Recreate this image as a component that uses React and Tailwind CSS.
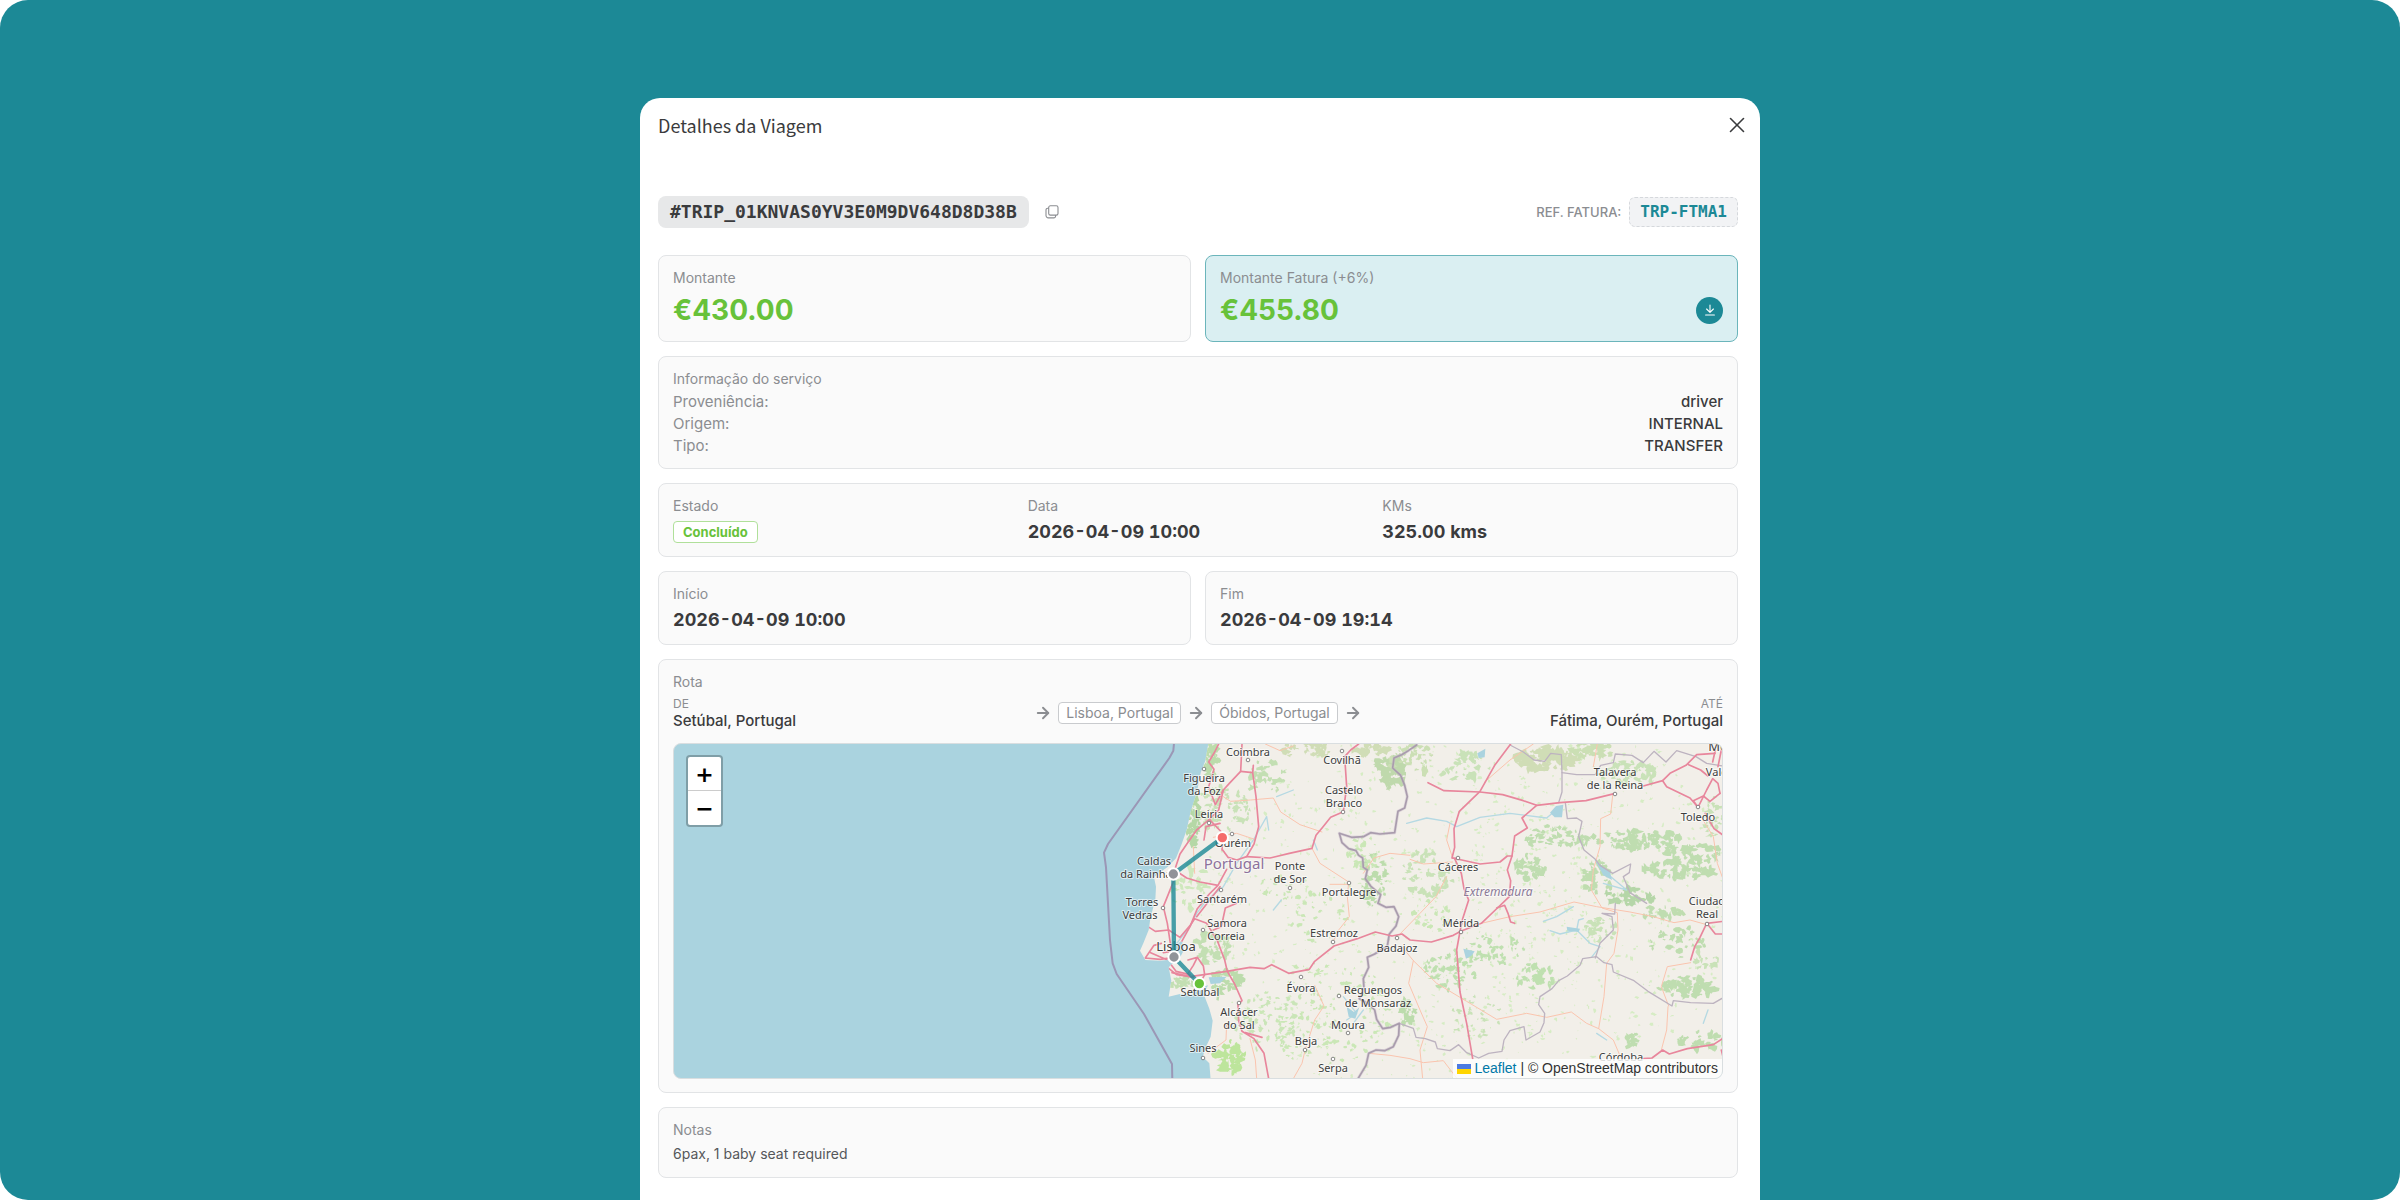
import { ArrowRight, X } from "lucide-react";

const serviceInfo = [
  { label: "Proveniência:", value: "driver" },
  { label: "Origem:", value: "INTERNAL" },
  { label: "Tipo:", value: "TRANSFER" },
];

const stops = ["Lisboa, Portugal", "Óbidos, Portugal"];

// geometry is drawn at 3 units per map pixel, labels in map pixels
const land =
  "M385 40 L376 92 L362 128 L350 190 L332 245 L320 300 L304 345 L288 385 L262 412 L238 428 L222 442 L228 470 L226 510 L212 560 L206 600 L190 640 L180 662 L196 690 L240 692 L262 690 L276 664 L292 640 L306 634 L312 660 L296 690 L276 702 L266 712 L274 752 L266 800 L300 792 L332 796 L350 776 L384 766 L376 782 L374 800 L388 836 L398 872 L392 920 L378 950 L368 980 L388 1000 L392 1050 L2000 1050 L2000 30 Z";

const seaBorder =
  "M282 40 L280 62 L268 84 L84 342 L72 368 L78 412 L90 630 L98 700 L110 732 L192 852 L276 1002 L277 1050";

const countryBorder =
  "M1010 45 L985 62 L965 74 L942 84 L938 114 L962 136 L974 166 L982 200 L974 234 L954 244 L944 308 L900 312 L872 308 L850 320 L815 322 L778 310 L786 338 L806 356 L828 362 L836 376 L848 384 L850 412 L862 420 L856 446 L872 468 L890 484 L902 494 L894 520 L918 532 L942 530 L956 560 L948 588 L928 612 L922 648 L884 672 L862 682 L866 712 L850 746 L852 776 L838 806 L866 822 L884 840 L890 868 L908 896 L932 892 L958 880 L956 916 L940 950 L914 962 L888 960 L866 970 L858 1006 L834 1046";

const regionBorders = [
  "M958 880 L1000 895 L1008 922 L1036 926 L1066 936 L1072 956 L1110 962 L1136 944 L1160 968 L1196 984 L1226 970 L1266 964 L1272 930 L1290 902 L1332 890 L1338 930 L1380 906 L1392 878 L1394 850 L1376 824 L1380 800 L1416 776 L1436 752 L1462 738 L1500 706 L1508 686 L1550 680 L1572 698 L1596 704 L1600 726 L1662 752 L1704 784 L1776 828 L1780 812 L1832 818 L1900 820 L1935 800",
  "M1290 45 L1330 66 L1362 90 L1394 94 L1412 70 L1444 74 L1446 128 L1490 134 L1546 134 L1562 106 L1600 98 L1606 72 L1656 76 L1690 98 L1722 64 L1758 96 L1790 62 L1848 80 L1880 100 L1940 110",
  "M1446 128 L1446 186 L1436 218 M1456 218 L1462 266 L1490 264 L1506 274 L1496 320 L1512 360 L1546 388 L1560 406 L1598 430 L1652 402 L1648 428 L1630 440 L1650 488 L1700 520",
  "M1546 684 L1560 640 L1600 600 L1596 560 L1566 550 L1604 552 L1606 520",
];

const motorways = [
  "M416 42 L404 66 L386 96 L402 118 L386 170 L406 224 L430 180 L448 160 L482 124 L486 42",
  "M482 124 L518 128 L520 106 M518 128 L528 200 L536 290 L522 342 L500 380 L470 390 L444 382 L428 360",
  "M500 380 L570 384 L628 370 L696 355 L708 316 L728 292 L752 262 L790 245 L800 170 L794 80 L812 60 L836 42",
  "M430 180 L416 240 L388 268 L350 300 L322 340 L300 372 L284 420 L282 450 L266 490 L250 530 L262 580 L274 660",
  "M388 268 L430 312 L426 360 M372 330 L378 290 L420 280",
  "M284 420 L320 444 L360 456 L414 466 L440 418 M414 466 L388 492 L352 536 L330 590 L302 640 L290 676",
  "M204 590 L226 604 L266 600 L300 622 L332 584 L344 566 L380 580 L412 632 L434 690 L442 724 L464 762 L486 812 L474 824",
  "M420 470 L350 560 M470 520 L436 534 L424 590 L400 600",
  "M196 684 L240 688 L282 682 M196 684 L222 646 L244 640 M250 668 L300 660 M212 668 L262 690",
  "M262 712 L290 734 L330 740 L372 734 L440 724 L510 712 L552 716 L575 704 L626 730 L688 718 L704 694 L762 648 L832 626 L886 606 L936 618 L966 612 L990 630 L1054 636 L1120 616 L1142 604",
  "M270 700 L288 724 L330 734 M322 734 L340 706 L352 682 L324 690 M352 682 L370 708 L374 734 L358 764 M276 728 L340 742",
  "M474 824 L476 872 L486 904 L522 926 L552 970 L566 1046 M496 908 L546 922",
  "M1044 158 L1092 182 L1200 186 L1268 194 L1330 212 L1370 226 L1440 218 L1518 212 L1606 190 M1690 168 L1748 152",
  "M1292 42 L1244 106 L1200 184 L1138 244 L1122 296 L1124 352 L1116 384 L1134 386",
  "M1370 226 L1326 264 L1342 294 L1304 318 L1296 378 L1282 420 L1292 452 L1288 500 L1246 540 L1204 580 L1142 604",
  "M1118 384 L1200 402 L1260 396 L1282 378 L1296 378",
  "M1124 386 L1144 430 L1152 476 L1166 510 L1148 566 L1140 604 L1130 660 L1140 786 L1160 880 L1178 986",
  "M1250 534 L1274 526 L1284 550 L1292 576 L1304 580",
  "M1748 152 L1770 130 L1818 106 L1850 74 L1905 70 M1748 152 L1760 170 L1830 204 L1854 232 L1880 180 L1898 146 L1914 160 L1920 190",
  "M1854 232 L1840 212 L1870 198 L1890 214 L1920 190 M1876 250 L1902 296 L1930 316 M1826 104 L1862 120 L1884 138 M1898 96 L1906 60 M1914 110 L1924 60",
  "M1930 574 L1880 580 L1860 622 L1844 650 L1832 690 M1884 584 L1906 612 L1930 612",
  "M1690 986 L1716 984 L1748 960 L1768 972 L1822 956 L1900 944 L1930 924 M1924 960 L1930 985",
];

const mainRoads = [
  "M430 200 L452 214 L512 210 L580 204 L602 246 L660 284 L726 306 M340 350 L344 430 M524 328 L470 310 L400 322",
  "M696 355 L720 400 L806 456 L802 500 L808 560 L776 600 L760 634 M750 463 L806 463",
  "M990 376 L930 370 L882 384 L868 404 L850 430 M990 388 L1030 402 L1118 396 M1118 384 L1100 330 L1110 280",
  "M704 766 L732 828 L704 870 L676 958 L666 1000 L640 1046 M510 926 L526 990 L530 1046",
  "M440 880 L438 930 L384 970 M866 970 L930 976 L990 986 L1030 998 L1090 992 L1130 1044",
  "M556 42 L600 62 L640 48 M1360 42 L1290 90 L1214 156 M1552 42 L1540 110",
  "M1598 196 L1592 252 L1562 266 L1560 350 L1540 420 L1534 480 L1566 534 L1612 548 L1614 600 L1602 670 L1580 700 L1572 800 L1556 896",
  "M1204 580 L1290 560 L1380 546 L1482 516 L1550 530 L1650 546 L1720 560 L1782 578 L1830 570 L1880 584",
  "M960 612 L1020 550 L1068 500 L1100 440 M966 650 L1000 692 L1070 760 L1160 814 L1250 868 L1340 850 L1400 862 L1474 846 L1520 880 L1556 896 L1600 930 L1622 982",
  "M1000 692 L986 760 L1020 840 L1042 890 L1020 960 L1028 1046 M1766 828 L1744 770 L1762 710 L1832 698 M1764 830 L1760 900 L1744 960",
  "M1860 256 L1900 320 L1912 400 L1930 450",
];

const rivers = [
  "M290 640 L330 590 L350 550 L380 510 L430 470 L470 400 L520 330 L560 260 L566 300",
  "M980 280 L1040 264 L1100 274 L1130 290 L1200 262 L1290 250 L1400 264 L1440 230",
  "M1546 390 L1580 430 L1640 480 L1570 460",
  "M580 540 L604 510 M700 330 L712 360 M590 200 L640 180",
  "M1390 574 L1430 560 L1480 530 M1410 602 L1440 612 L1490 600 L1496 570 L1510 566 M1490 600 L1530 640 L1560 650 L1536 680",
  "M790 800 L830 850 L800 870 M820 880 L850 840 M1550 910 L1580 930 M1870 880 L1884 840",
];

const lakes = [
  "M1410 248 L1428 228 L1450 224 L1446 262 L1424 262 Z",
  "M1192 70 L1216 56 L1214 82 L1196 84 Z",
  "M800 830 L822 846 L838 832 L826 866 L806 860 Z",
  "M1150 656 L1184 664 L1176 676 L1158 686 Z",
  "M1546 392 L1590 426 L1596 450 L1570 436 Z",
  "M1460 590 L1500 596 L1496 606 L1462 602 Z",
  "M386 742 L440 740 L420 760 L392 762 Z",
];

// [cx, cy, rx, ry, amount, blob size, colour]
const woods = [
  [960, 550, 600, 540, 700, 6, "#d6ecc4"],
  [1560, 500, 400, 500, 380, 6, "#d6ecc4"],
  [420, 240, 90, 70, 70, 11, "#c9e2b8"],
  [340, 270, 18, 90, 60, 12, "#b5d8a6"],
  [392, 90, 24, 50, 34, 13, "#bcdcac"],
  [560, 140, 60, 50, 26, 14, "#c3dfb3"],
  [330, 470, 60, 70, 34, 12, "#cfe8bd"],
  [400, 650, 50, 60, 40, 14, "#c3dfb3"],
  [440, 760, 50, 40, 36, 14, "#bcdcac"],
  [310, 760, 34, 22, 22, 12, "#c3dfb3"],
  [450, 980, 40, 50, 36, 15, "#bde59c"],
  [560, 870, 100, 90, 70, 9, "#cae5b8"],
  [740, 850, 200, 160, 160, 8, "#cae7b6"],
  [930, 120, 40, 60, 46, 17, "#bfd9ac"],
  [870, 60, 60, 20, 26, 14, "#d0ddb6"],
  [680, 60, 80, 24, 30, 12, "#d0ddb6"],
  [880, 450, 40, 80, 50, 11, "#bcdcac"],
  [850, 370, 50, 50, 30, 10, "#cae7b6"],
  [720, 560, 120, 80, 40, 8, "#cae7b6"],
  [600, 470, 60, 40, 24, 8, "#cae7b6"],
  [1040, 430, 80, 70, 46, 12, "#c9e2b8"],
  [1000, 90, 70, 44, 40, 12, "#cbdfb4"],
  [1150, 110, 80, 40, 30, 12, "#c9e2b8"],
  [1400, 90, 90, 34, 70, 17, "#d0ddb6"],
  [1540, 60, 70, 22, 30, 15, "#cbdfb4"],
  [1640, 130, 90, 36, 44, 12, "#c9e2b8"],
  [1440, 320, 110, 34, 50, 11, "#bfddb0"],
  [1350, 410, 44, 34, 40, 12, "#bfddb0"],
  [1680, 330, 130, 30, 80, 12, "#bfddb0"],
  [1830, 370, 90, 30, 50, 13, "#bfddb0"],
  [1800, 420, 110, 26, 50, 14, "#bfddb0"],
  [1550, 440, 46, 50, 36, 12, "#bfddb0"],
  [1640, 500, 80, 26, 40, 13, "#b5d6a8"],
  [1740, 545, 70, 18, 26, 12, "#bfddb0"],
  [1560, 600, 50, 40, 32, 10, "#c9e2b8"],
  [1800, 640, 90, 50, 34, 11, "#bfddb0"],
  [1820, 770, 90, 28, 56, 15, "#bfddb0"],
  [1880, 690, 40, 30, 14, 12, "#c9e2b8"],
  [1370, 740, 60, 40, 34, 12, "#bfe0b0"],
  [1240, 660, 90, 44, 38, 10, "#bfe0b0"],
  [1110, 720, 80, 60, 50, 11, "#bfe0b0"],
  [1190, 860, 80, 60, 28, 9, "#c9e2b8"],
  [980, 850, 24, 40, 26, 14, "#bcdcac"],
  [1050, 560, 60, 50, 22, 8, "#cae7b6"],
  [1660, 930, 30, 20, 10, 12, "#bfddb0"],
  [1860, 930, 70, 24, 28, 11, "#bfddb0"],
  [1900, 260, 30, 60, 24, 10, "#c9e2b8"],
];

const labels = [
  [574, 12, "Coimbra"],
  [530, 38, "Figueira"],
  [530, 51, "da Foz"],
  [535, 74, "Leiria"],
  [559, 103, "Ourém"],
  [480, 121, "Caldas"],
  [472, 134, "da Rainha"],
  [616, 126, "Ponte"],
  [616, 139, "de Sor"],
  [548, 159, "Santarém"],
  [468, 162, "Torres"],
  [466, 175, "Vedras"],
  [553, 183, "Samora"],
  [552, 196, "Correia"],
  [675, 152, "Portalegre"],
  [660, 193, "Estremoz"],
  [526, 252, "Setúbal"],
  [627, 248, "Évora"],
  [699, 250, "Reguengos"],
  [704, 263, "de Monsaraz"],
  [565, 272, "Alcácer"],
  [565, 285, "do Sal"],
  [674, 285, "Moura"],
  [632, 301, "Beja"],
  [529, 308, "Sines"],
  [659, 328, "Serpa"],
  [668, 20, "Covilhã"],
  [670, 50, "Castelo"],
  [670, 63, "Branco"],
  [723, 208, "Badajoz"],
  [784, 127, "Cáceres"],
  [787, 183, "Mérida"],
  [941, 32, "Talavera"],
  [941, 45, "de la Reina"],
  [1024, 77, "Toledo"],
  [1033, 161, "Ciudad"],
  [1033, 174, "Real"],
  [1060, 32, "Valdemoro"],
  [947, 317, "Córdoba"],
];

const towns = [
  [574, 16], [530, 25], [535, 79], [558, 90], [547, 146], [489, 164], [529, 186],
  [616, 144], [675, 139], [659, 198], [627, 233], [665, 252], [565, 259], [674, 289],
  [631, 306], [529, 314], [659, 315], [668, 7], [669, 68], [723, 194], [784, 114],
  [787, 188], [941, 50], [1024, 63], [1033, 180],
];

const waypoints = [
  [427, 323, "#f56c6c"],
  [280, 432, "#909399"],
  [282, 681, "#909399"],
  [358, 761, "#67c23a"],
];

function makeRandom(seed) {
  let s = seed;
  return () => {
    s = (s * 16807) % 2147483647;
    return s / 2147483647;
  };
}

function buildWood([cx, cy, rx, ry, amount, size], index) {
  const random = makeRandom(index * 977 + 131);
  let d = "";
  for (let i = 0; i < amount; i++) {
    const angle = random() * Math.PI * 2;
    const reach = Math.sqrt(random());
    const x = cx + Math.cos(angle) * rx * reach;
    const y = cy + Math.sin(angle) * ry * reach;
    const r = size * (0.3 + random() * 0.8);
    const stretch = 0.7 + random() * 0.7;
    for (let k = 0; k < 9; k++) {
      const a = (k / 9) * Math.PI * 2;
      const rr = r * (0.3 + random());
      const px = Math.round(x + Math.cos(a) * rr * stretch);
      const py = Math.round(y + (Math.sin(a) * rr) / stretch);
      d += `${k === 0 ? "M" : "L"}${px} ${py}`;
    }
    d += "Z";
  }
  return d;
}

const woodPaths = woods.map((wood, index) => ({ d: buildWood(wood, index), fill: wood[6] }));

export default function App() {
  return (
    <main className="min-h-screen bg-white font-['Inter',sans-serif] text-[#3a3b3d]">
      <div className="flex min-h-screen justify-center rounded-[28px] bg-[#1c8996] pt-[98px]">
        <section
          role="dialog"
          aria-labelledby="trip-title"
          className="w-full max-w-[1120px] rounded-t-[20px] bg-white pb-[21px]"
        >
          <header className="flex h-[54px] items-center justify-between pr-[10px] pl-[18px]">
            <h1 id="trip-title" className="font-['Noto_Sans_CJK_JP',sans-serif] text-[18px] leading-6">
              Detalhes da Viagem
            </h1>
            <button type="button" aria-label="Fechar">
              <X size={26} strokeWidth={1.5} />
            </button>
          </header>

          <div className="mt-11 pr-[22px] pl-[18px]">
            <TripReference />

            <div className="mt-[27px] flex flex-col gap-[14px]">
              <div className="grid grid-cols-2 gap-[14px]">
                <Card title="Montante">
                  <p className="text-[28px] leading-9 font-bold text-[#67c23a]">€430.00</p>
                </Card>
                <Card title="Montante Fatura (+6%)" highlight>
                  <div className="flex items-center justify-between">
                    <p className="text-[28px] leading-9 font-bold text-[#67c23a]">€455.80</p>
                    <button
                      type="button"
                      aria-label="Descarregar fatura"
                      className="flex size-[27px] items-center justify-center rounded-full bg-[#1c8996] text-white"
                    >
                      <DownloadIcon />
                    </button>
                  </div>
                </Card>
              </div>

              <Card title="Informação do serviço">
                <dl className="flex flex-col gap-1">
                  {serviceInfo.map((row) => (
                    <div key={row.label} className="flex justify-between text-[15px] leading-[18px]">
                      <dt className="text-[#8b8d91]">{row.label}</dt>
                      <dd className="font-medium">{row.value}</dd>
                    </div>
                  ))}
                </dl>
              </Card>

              <div className="grid grid-cols-3 gap-[14px] rounded-lg border border-[#e2e4e6] bg-[#fafafa] px-[14px] pt-[14px] pb-[13px]">
                <Field title="Estado">
                  <div className="flex h-[23px] items-center">
                    <span className="rounded-sm border border-[#b0e09a] bg-white px-[9px] text-[13px] leading-5 font-bold text-[#67c23a]">
                      Concluído
                    </span>
                  </div>
                </Field>
                <Field title="Data">
                  <Value>2026-04-09 10:00</Value>
                </Field>
                <Field title="KMs">
                  <Value>325.00 kms</Value>
                </Field>
              </div>

              <div className="grid grid-cols-2 gap-[14px]">
                <Card title="Início">
                  <Value>2026-04-09 10:00</Value>
                </Card>
                <Card title="Fim">
                  <Value>2026-04-09 19:14</Value>
                </Card>
              </div>

              <Card title="Rota">
                <Route />
                <RouteMap />
              </Card>

              <Card title="Notas">
                <p className="text-sm leading-5 text-[#55575a]">6pax, 1 baby seat required</p>
              </Card>
            </div>
          </div>
        </section>
      </div>
    </main>
  );
}

function TripReference() {
  return (
    <div className="flex items-center justify-between">
      <div className="flex items-center gap-4">
        <span className="rounded-lg bg-[#e7e8e9] px-3 font-['DejaVu_Sans_Mono',monospace] text-[18px] leading-8 font-bold">
          #TRIP_01KNVAS0YV3E0M9DV648D8D38B
        </span>
        <button type="button" aria-label="Copiar" className="text-[#8b8d91]">
          <CopyIcon />
        </button>
      </div>
      <div className="flex items-center gap-2">
        <span className="text-[13px] leading-5 font-medium text-[#8b8d91]">REF. FATURA:</span>
        <span className="rounded-md border border-dashed border-[#d5d8dc] bg-[#f2f3f5] px-[10px] font-['DejaVu_Sans_Mono',monospace] text-base leading-7 font-bold text-[#1c8996]">
          TRP-FTMA1
        </span>
      </div>
    </div>
  );
}

function Card({ title, highlight, children }) {
  return (
    <div
      className={`rounded-lg border px-[14px] pt-[14px] pb-[13px] ${
        highlight ? "border-[#6bb5bb] bg-[#daeff2]" : "border-[#e2e4e6] bg-[#fafafa]"
      }`}
    >
      <Field title={title}>{children}</Field>
    </div>
  );
}

function Field({ title, children }) {
  return (
    <div>
      <h2 className="mb-[6px] text-sm leading-4 text-[#8b8d91]">{title}</h2>
      {children}
    </div>
  );
}

function Value({ children }) {
  return <p className="text-lg leading-[23px] font-bold tabular-nums">{children}</p>;
}

function Route() {
  return (
    <div className="grid grid-cols-[1fr_auto_1fr] items-center">
      <div>
        <p className="text-xs leading-4 text-[#8b8d91]">DE</p>
        <p className="text-[15px] leading-[18px] font-medium">Setúbal, Portugal</p>
      </div>
      <div className="flex items-center gap-[6px] text-[#8b8d91]">
        <ArrowRight size={18} strokeWidth={2.5} />
        {stops.map((stop) => (
          <div key={stop} className="flex items-center gap-[6px]">
            <span className="rounded-sm border border-[#c9cbce] bg-white px-[7px] text-sm leading-5">
              {stop}
            </span>
            <ArrowRight size={18} strokeWidth={2.5} />
          </div>
        ))}
      </div>
      <div className="text-right">
        <p className="text-xs leading-4 text-[#8b8d91]">ATÉ</p>
        <p className="text-[15px] leading-[18px] font-medium">Fátima, Ourém, Portugal</p>
      </div>
    </div>
  );
}

function RouteMap() {
  return (
    <div className="relative mt-[13px] h-[336px] overflow-hidden rounded-lg border border-[#d9dee0] bg-[#aad3df]">
      <svg
        viewBox="0 0 1048 334"
        preserveAspectRatio="xMidYMid slice"
        className="size-full"
        role="img"
        aria-label="Rota"
      >
        <g transform="translate(406 -14) scale(0.33333)" fill="none" strokeLinejoin="round" strokeLinecap="round">
          <defs>
            <clipPath id="land">
              <path d={land} />
            </clipPath>
          </defs>
          <path d={land} fill="#f2efe9" />
          <g clipPath="url(#land)">
            {woodPaths.map((wood, index) => (
              <path key={index} d={wood.d} fill={wood.fill} />
            ))}
            {rivers.map((d) => (
              <path key={d} d={d} stroke="#b5d9e3" strokeWidth="4" />
            ))}
            {lakes.map((d) => (
              <path key={d} d={d} fill="#aad3df" />
            ))}
            {mainRoads.map((d) => (
              <path key={d} d={d} stroke="#fac4ae" strokeWidth="3" />
            ))}
            {regionBorders.map((d) => (
              <path key={d} d={d} stroke="#bdb3c0" strokeWidth="4" />
            ))}
            <path d={countryBorder} stroke="#c9bccb" strokeWidth="9" opacity="0.5" />
            <path d={countryBorder} stroke="#a99cad" strokeWidth="5" />
            {motorways.map((d) => (
              <path key={d} d={d} stroke="#e8869c" strokeWidth="5" />
            ))}
          </g>
          <path d={seaBorder} stroke="#9b97b6" strokeWidth="6" />
        </g>

        {towns.map(([x, y]) => (
          <circle key={`${x}-${y}`} cx={x} cy={y} r="1.8" fill="#fff" stroke="#6b6b6b" strokeWidth="0.8" />
        ))}

        <g
          className="font-['Noto_Sans',sans-serif] text-[11px]"
          textAnchor="middle"
          fill="#3d3d3d"
          stroke="#fff"
          strokeOpacity="0.6"
          strokeWidth="2"
          strokeLinejoin="round"
          paintOrder="stroke"
        >
          {labels.map(([x, y, name]) => (
            <text key={name} x={x} y={y}>
              {name}
            </text>
          ))}
          <text x="502" y="207" className="text-[13px]">Lisboa</text>
          <text x="1062" y="7" className="text-[13px]">Móstoles</text>
          <text x="560" y="125" className="text-[15px]" fill="#8d729c">Portugal</text>
          <text x="824" y="152" className="text-xs italic" fill="#8b7a97">Extremadura</text>
        </g>

        <g transform="translate(406 -14) scale(0.33333)">
          <polyline
            points={waypoints.map(([x, y]) => `${x},${y}`).join(" ")}
            fill="none"
            stroke="#1c8996"
            strokeWidth="13"
            strokeLinejoin="round"
            opacity="0.8"
          />
          {waypoints.map(([x, y, color]) => (
            <circle key={y} cx={x} cy={y} r="17" fill={color} stroke="#fff" strokeWidth="6" />
          ))}
        </g>
      </svg>

      <div className="absolute top-[11px] left-3 w-[37px] overflow-hidden rounded-sm border-2 border-black/25 bg-white bg-clip-padding font-['DejaVu_Sans',sans-serif] text-[22px] font-bold text-black">
        <button type="button" aria-label="Ampliar" className="block h-[34px] w-full border-b border-[#ccc] leading-9">
          +
        </button>
        <button type="button" aria-label="Reduzir" className="block h-[34px] w-full leading-9">
          −
        </button>
      </div>

      <div className="absolute right-0 bottom-0 flex items-center gap-[3px] bg-white/80 px-1 font-['Liberation_Sans',sans-serif] text-sm leading-[19px] text-[#333]">
        <svg viewBox="0 0 14 10" className="h-[10px] w-[14px]" aria-hidden="true">
          <path d="M0 0H14V5H0Z" fill="#4c7be1" />
          <path d="M0 5H14V10H0Z" fill="#ffd500" />
        </svg>
        <span>
          <a href="#leaflet" className="text-[#0078a8]">Leaflet</a> | © OpenStreetMap contributors
        </span>
      </div>
    </div>
  );
}

function CopyIcon() {
  return (
    <svg viewBox="0 0 14 14" className="size-[14px]" fill="none" stroke="currentColor" strokeWidth="1.1">
      <rect x="3.7" y="0.8" width="9.3" height="9.3" rx="1.7" />
      <path d="M3.7 3.2 H2.8 A1.8 1.8 0 0 0 1 5 V10.6 A2.3 2.3 0 0 0 3.3 12.9 H8.8 A1.8 1.8 0 0 0 10.6 11.1 V10.1" />
    </svg>
  );
}

function DownloadIcon() {
  return (
    <svg viewBox="0 0 14 14" className="size-[14px]" fill="none" stroke="currentColor" strokeWidth="1.1" strokeLinecap="round" strokeLinejoin="round">
      <path d="M7 2 V9.2 M3.6 6 L7 9.4 L10.4 6 M2.6 12 H11.4" />
    </svg>
  );
}
